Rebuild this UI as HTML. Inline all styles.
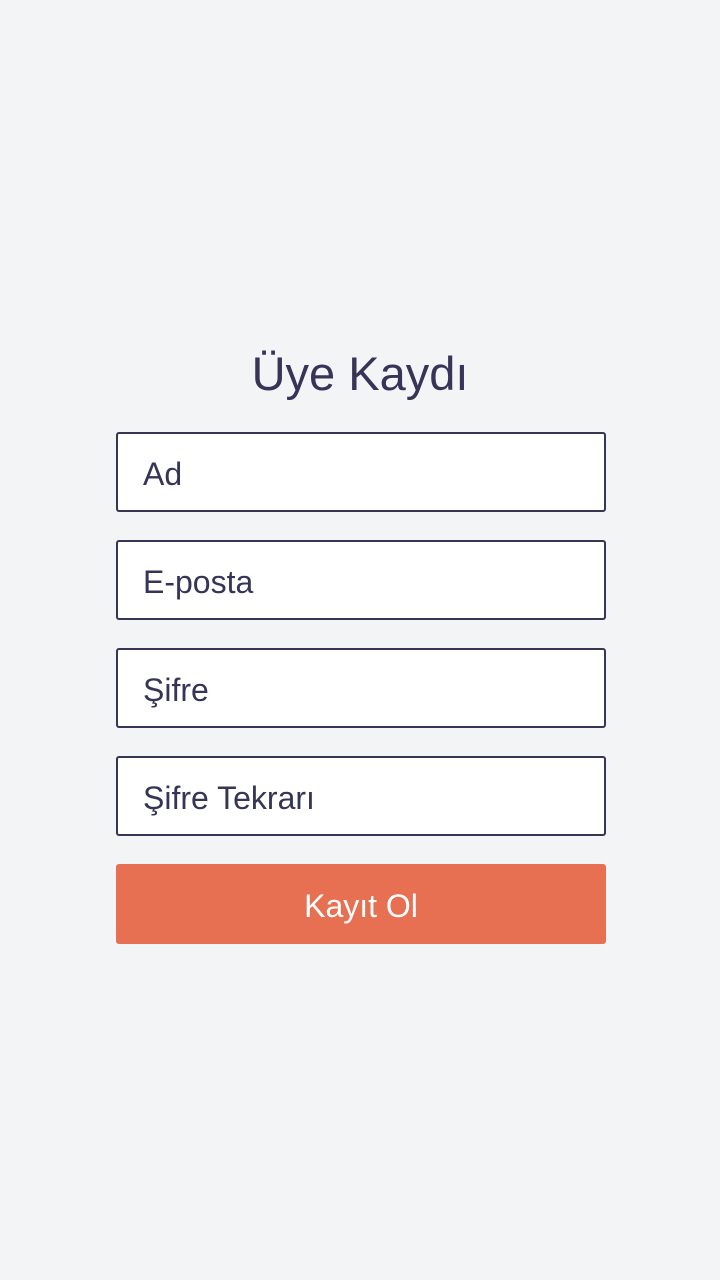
<!DOCTYPE html>
<html><head><meta charset="utf-8"><style>
html,body{margin:0;padding:0;}
body{width:720px;height:1280px;background:#f3f4f6;font-family:"Liberation Sans",sans-serif;color:#363457;position:relative;overflow:hidden;}
h1{position:absolute;top:341px;left:0;width:720px;text-align:center;margin:0;font-weight:normal;font-size:47px;line-height:66px;}
.in{position:absolute;left:116px;width:486px;height:76px;border:2px solid #363457;border-radius:3px;background:#fff;box-sizing:content-box;font-size:32px;line-height:80px;text-indent:25px;}
.btn{position:absolute;left:116px;top:864px;width:490px;height:80px;background:#e87052;border-radius:3px;color:#fff;font-size:32px;line-height:84px;text-align:center;}
</style></head><body>
<h1>Üye Kaydı</h1>
<div class="in" style="top:432px">Ad</div>
<div class="in" style="top:540px">E-posta</div>
<div class="in" style="top:648px">Şifre</div>
<div class="in" style="top:756px">Şifre Tekrarı</div>
<div class="btn">Kayıt Ol</div>
</body></html>
